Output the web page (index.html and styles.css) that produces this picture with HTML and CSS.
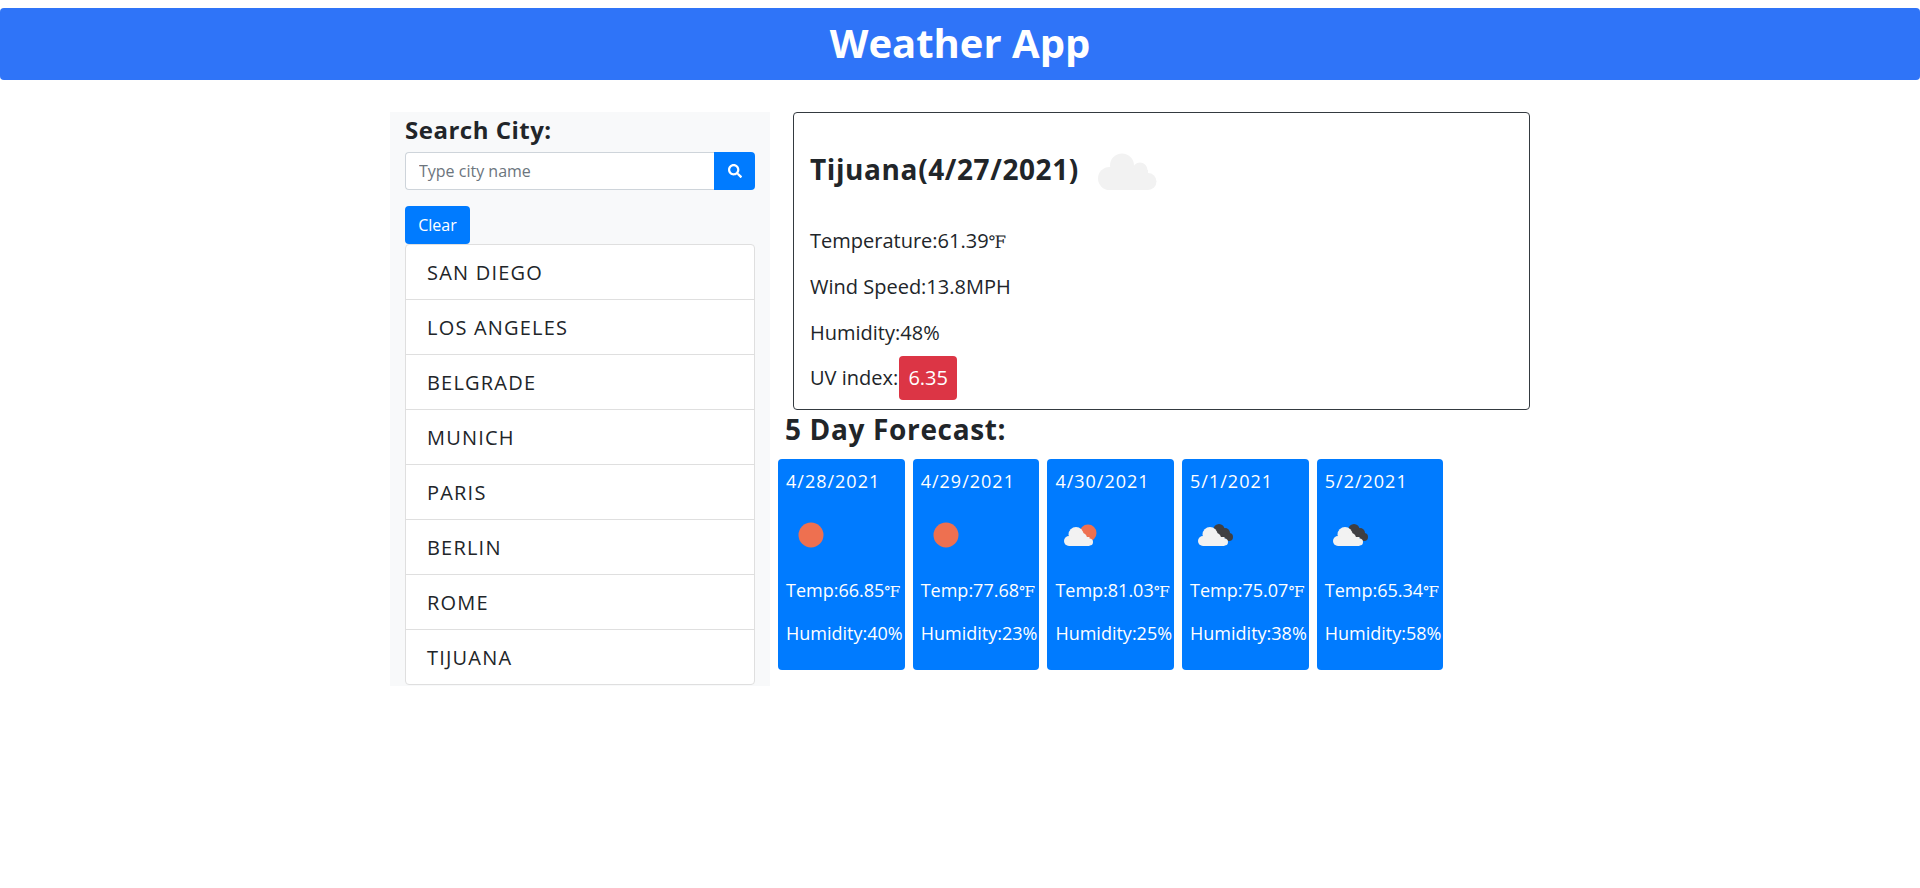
FILE: index.html
```html
<!DOCTYPE html>
<html lang="en">
<head>
    <meta charset="UTF-8">
    <meta name="viewport" content="width=device-width, initial-scale=1.0">
    <title>Weather App</title>
    <link rel="stylesheet" href="styles.css">
</head>
<body>

    <header class="top-bar">
        <h1>Weather App</h1>
    </header>

    <div class="container">
        <aside class="sidebar">
            <h4>Search City:</h4>
            <form class="search-group">
                <input type="text" placeholder="Type city name">
                <button type="button" class="search-button" aria-label="Search">
                    <svg viewBox="0 0 512 512" width="14" height="14"><path fill="#fff" d="M505 442.7L405.3 343c-4.5-4.5-10.6-7-17-7H372c27.6-35.3 44-79.7 44-128C416 93.1 322.9 0 208 0S0 93.1 0 208s93.1 208 208 208c48.3 0 92.7-16.4 128-44v16.3c0 6.4 2.5 12.5 7 17l99.7 99.7c9.4 9.4 24.6 9.4 33.9 0l28.3-28.3c9.4-9.4 9.4-24.6.1-34zM208 336c-70.7 0-128-57.2-128-128 0-70.7 57.2-128 128-128 70.7 0 128 57.2 128 128 0 70.7-57.2 128-128 128z"/></svg>
                </button>
            </form>
            <button type="button" class="clear-button">Clear</button>
            <ul class="city-list">
                <li>SAN DIEGO</li>
                <li>LOS ANGELES</li>
                <li>BELGRADE</li>
                <li>MUNICH</li>
                <li>PARIS</li>
                <li>BERLIN</li>
                <li>ROME</li>
                <li>TIJUANA</li>
            </ul>
        </aside>

        <main class="content">
            <section class="current">
                <div class="current-title">
                    <h2>Tijuana(4/27/2021)</h2>
                    <svg class="current-icon" viewBox="18 13 60 38" width="60" height="38">
                        <g fill="#f2f2f2">
                            <circle cx="42" cy="25.5" r="12"/>
                            <circle cx="60" cy="30" r="7.5"/>
                            <circle cx="29.5" cy="38.5" r="11.5"/>
                            <circle cx="68" cy="41.5" r="8.5"/>
                            <rect x="29" y="30" width="39" height="20"/>
                        </g>
                    </svg>
                </div>
                <p>Temperature:61.39<span class="unit">℉</span></p>
                <p>Wind Speed:13.8MPH</p>
                <p>Humidity:48%</p>
                <div class="uv-row">UV index:<span class="uv-badge">6.35</span></div>
            </section>

            <h3 class="forecast-title">5 Day Forecast:</h3>

            <div class="forecast">
                <div class="day-card">
                    <p class="day-date">4/28/2021</p>
                    <svg class="day-icon" viewBox="0 0 50 50"><circle cx="25" cy="25" r="12.5" fill="#ee7050"/></svg>
                    <p>Temp:66.85<span class="unit">℉</span></p>
                    <p>Humidity:40%</p>
                </div>
                <div class="day-card">
                    <p class="day-date">4/29/2021</p>
                    <svg class="day-icon" viewBox="0 0 50 50"><circle cx="25" cy="25" r="12.5" fill="#ee7050"/></svg>
                    <p>Temp:77.68<span class="unit">℉</span></p>
                    <p>Humidity:23%</p>
                </div>
                <div class="day-card">
                    <p class="day-date">4/30/2021</p>
                    <svg class="day-icon" viewBox="0 0 50 50">
                        <circle cx="33" cy="23" r="8.5" fill="#ee7050"/>
                        <g fill="#f2f2f2"><circle cx="21" cy="24.5" r="7.5"/><circle cx="14" cy="31" r="5"/><circle cx="27" cy="28" r="5"/><circle cx="34.5" cy="32" r="3.5"/><rect x="14" y="27" width="20.5" height="9"/></g>
                    </svg>
                    <p>Temp:81.03<span class="unit">℉</span></p>
                    <p>Humidity:25%</p>
                </div>
                <div class="day-card">
                    <p class="day-date">5/1/2021</p>
                    <svg class="day-icon" viewBox="0 0 50 50">
                        <g fill="#3f3f42"><circle cx="29" cy="19.5" r="5.5"/><circle cx="35" cy="23" r="5"/><circle cx="39" cy="27" r="4"/><rect x="26" y="20" width="10" height="8"/></g>
                        <g fill="#f2f2f2"><circle cx="20" cy="24.5" r="7.5"/><circle cx="13" cy="31" r="5"/><circle cx="26" cy="28" r="5"/><circle cx="34.5" cy="32" r="3.5"/><rect x="13" y="27" width="21.5" height="9"/></g>
                    </svg>
                    <p>Temp:75.07<span class="unit">℉</span></p>
                    <p>Humidity:38%</p>
                </div>
                <div class="day-card">
                    <p class="day-date">5/2/2021</p>
                    <svg class="day-icon" viewBox="0 0 50 50">
                        <g fill="#3f3f42"><circle cx="29" cy="19.5" r="5.5"/><circle cx="35" cy="23" r="5"/><circle cx="39" cy="27" r="4"/><rect x="26" y="20" width="10" height="8"/></g>
                        <g fill="#f2f2f2"><circle cx="20" cy="24.5" r="7.5"/><circle cx="13" cy="31" r="5"/><circle cx="26" cy="28" r="5"/><circle cx="34.5" cy="32" r="3.5"/><rect x="13" y="27" width="21.5" height="9"/></g>
                    </svg>
                    <p>Temp:65.34<span class="unit">℉</span></p>
                    <p>Humidity:58%</p>
                </div>
            </div>
        </main>
    </div>

</body>
</html>
```

FILE: styles.css
```css
body {
    margin: 0;
    font-family: "Comic Sans MS", "Open Sans", "DejaVu Sans", sans-serif;
    font-size: 20px;
    line-height: 1.5;
    color: #212529;
    background-color: #fff;
}

p {
    margin: 0 0 16px 0;
}

.unit {
    font-family: "DejaVu Serif", "Liberation Serif", serif;
    font-size: 0.85em;
}

.top-bar {
    margin-top: 8px;
    height: 72px;
    display: flex;
    align-items: center;
    justify-content: center;
    background-color: #2f74f8;
    border-radius: 4px;
}

.top-bar h1 {
    margin: 0;
    color: white;
    font-size: 40px;
    line-height: 1.2;
    font-weight: 700;
    padding-bottom: 2px;
}

.container {
    width: 1140px;
    margin: 32px auto 0 auto;
    display: flex;
    align-items: flex-start;
}

.sidebar {
    width: 380px;
    box-sizing: border-box;
    padding: 0 15px 1px 15px;
    background-color: #f8f9fa;
}

.sidebar h4 {
    margin: 0;
    height: 40px;
    font-size: 24px;
    line-height: 36px;
    font-weight: 700;
    letter-spacing: 0.5px;
}

.search-group {
    display: flex;
    height: 38px;
    margin-bottom: 16px;
}

.search-group input {
    flex: 1;
    min-width: 0;
    box-sizing: border-box;
    padding: 6px 12px 6px 13px;
    border: 1px solid #ced4da;
    border-right: none;
    border-radius: 4px 0 0 4px;
    font-family: inherit;
    font-size: 16px;
    color: #495057;
    background-color: #fff;
}

.search-group input::placeholder {
    color: #6c757d;
}

.search-button {
    width: 41px;
    padding: 0;
    display: flex;
    align-items: center;
    justify-content: center;
    background-color: #007bff;
    border: none;
    border-radius: 0 4px 4px 0;
}

.clear-button {
    display: block;
    width: 65px;
    height: 38px;
    padding: 0;
    background-color: #007bff;
    color: white;
    border: none;
    border-radius: 4px;
    font-family: inherit;
    font-size: 16px;
}

.city-list {
    list-style: none;
    margin: 0;
    padding: 0;
    background-color: #fff;
    border: 1px solid #dfdfdf;
    border-radius: 4px;
}

.city-list li {
    padding: 13px 20px 11px 21px;
    border-bottom: 1px solid #dfdfdf;
    letter-spacing: 1.2px;
}

.city-list li:last-child {
    border-bottom: none;
}

.content {
    width: 760px;
}

.current {
    margin-left: 23px;
    width: 737px;
    height: 298px;
    box-sizing: border-box;
    padding: 0 16px;
    border: 1px solid #343a40;
    border-radius: 4px;
}

.current-title {
    display: flex;
    align-items: center;
    height: 80px;
    margin: 17px 0 16px 0;
}

.current-title h2 {
    margin: 0;
    font-size: 28px;
    line-height: 1.2;
    font-weight: 700;
    letter-spacing: 0.6px;
}

.current-icon {
    margin-left: 19px;
    margin-top: 4px;
}

.uv-row {
    display: flex;
    align-items: center;
    margin-top: -8px;
}

.uv-badge {
    width: 58px;
    height: 44px;
    margin-left: 1px;
    line-height: 44px;
    text-align: center;
    color: white;
    background-color: #dc3545;
    border-radius: 4px;
}

.forecast-title {
    margin: 2px 0 13px 15px;
    font-size: 28px;
    line-height: 34px;
    font-weight: 700;
    letter-spacing: 0.65px;
}

.forecast {
    display: flex;
    gap: 8px;
    margin-left: 8px;
}

.day-card {
    width: 126.7px;
    height: 211px;
    box-sizing: border-box;
    padding: 9px 8px 8px 8px;
    color: white;
    background-color: #007bff;
    border-radius: 4px;
    font-size: 18px;
    white-space: nowrap;
}

.day-date {
    margin-bottom: 15px;
    letter-spacing: 1px;
}

.day-icon {
    display: block;
    width: 50px;
    height: 50px;
    margin-bottom: 17px;
}
```
